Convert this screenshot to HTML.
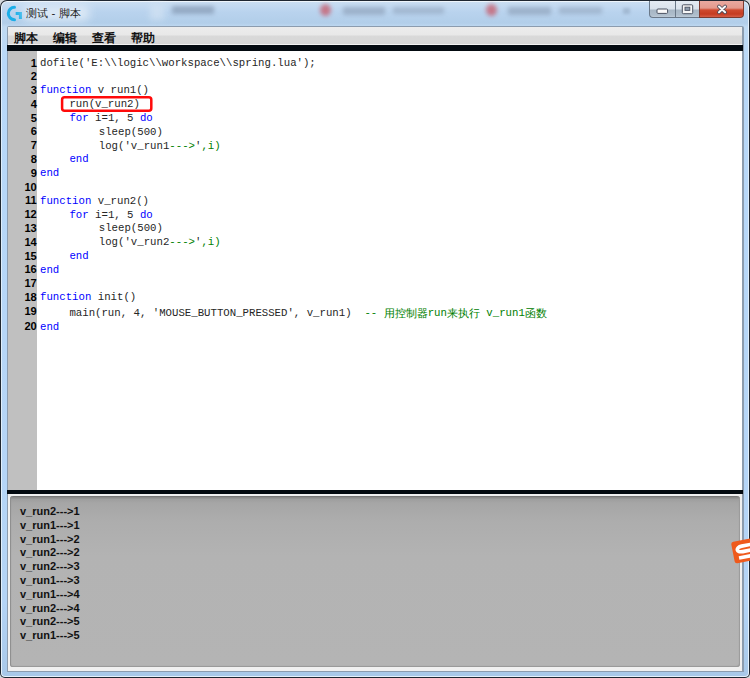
<!DOCTYPE html>
<html><head><meta charset="utf-8">
<style>
html,body{margin:0;padding:0;}
body{width:750px;height:678px;position:relative;overflow:hidden;background:#d4d8dc;font-family:"Liberation Sans",sans-serif;}
.abs{position:absolute;}
#outer{left:0;top:0;width:750px;height:678px;background:#1f2731;border-radius:7px 7px 5px 5px;}
#frame{left:1px;top:1px;width:748px;height:676px;border-radius:6px 6px 4px 4px;
 background:linear-gradient(to bottom,#eef5fb 0px,#dcecfa 60px,#e2f0fc 600px,#e6f2fc 678px);}
#frameinner{left:2px;top:2px;width:746px;height:674px;border-radius:5px 5px 3px 3px;
 background:linear-gradient(to bottom,#cadef2 0px,#b9d3ee 10px,#b2cee9 21px,#c0daf2 25px,#b8d8f8 60px,#b4d4f6 600px,#a8c8e8 676px);}
#cborder{left:7px;top:26px;width:737px;height:646px;background:#8c9cae;border-radius:2px 2px 0 0;}
#client{left:8px;top:27px;width:734px;height:644px;background:#f0f0f0;}
#menubar{left:8px;top:27px;width:734px;height:18px;background:linear-gradient(to bottom,#ececec 0,#e8e8e8 8px,#d9d9d9 9px,#d6d6d6 17px,#f2f2f2 17px);}
.menu{top:30.5px;font-size:11.6px;font-weight:bold;color:#111;white-space:nowrap;}
#bar1{left:7px;top:45px;width:736px;height:6px;background:#030a10;}
#editor{left:8px;top:51px;width:734px;height:439px;background:#fff;}
#gutter{left:8px;top:51px;width:29px;height:439px;background:#c0c0c0;}
#bar2{left:7px;top:490px;width:736px;height:4px;background:#030a10;}
#console{left:10px;top:496px;width:730px;height:170.6px;border-radius:3px;
 background:linear-gradient(to bottom,#6c6c6c 0,#8a8a8a 1.5px,#9e9e9e 3.5px,#a6a6a6 7px,#adadad 25px,#b3b3b3 60px,#b4b4b4 100%);
 box-shadow:inset 1px 0 1px #8c8c8c, inset -1px -1px 1px #9a9a9a;}
.ln{position:absolute;font-family:"Liberation Sans",sans-serif;font-weight:bold;font-size:11.1px;color:#000;text-align:right;width:28px;left:8.8px;line-height:14px;}
.cl{position:absolute;font-family:"Liberation Mono",monospace;font-size:10.7px;color:#262626;white-space:pre;line-height:14px;}
.k{color:#0000ff;}
.g{color:#008000;}
.cj{display:inline-block;width:11px;font-size:11.3px;text-align:left;position:relative;top:1px;}
.out{position:absolute;left:20px;font-family:"Liberation Sans",sans-serif;font-size:11px;font-weight:bold;color:#111;line-height:14px;white-space:pre;}
.btn{top:1px;height:17px !important;}
</style></head><body>
<div id="outer" class="abs"></div>
<div id="frame" class="abs"></div>
<div id="frameinner" class="abs"></div>

<!-- blurred background in title bar -->
<div class="abs" style="left:150px;top:4px;width:14px;height:16px;background:#d8e6f4;filter:blur(3px);opacity:.6"></div>
<div class="abs" style="left:172px;top:6px;width:42px;height:8px;background:#8094ae;filter:blur(2.2px);opacity:.65"></div>
<div class="abs" style="left:320px;top:4px;width:11px;height:12px;background:#c85868;filter:blur(2px);opacity:.75;border-radius:50%"></div>
<div class="abs" style="left:343px;top:7px;width:42px;height:8px;background:#8a9cb4;filter:blur(2.2px);opacity:.6"></div>
<div class="abs" style="left:393px;top:7px;width:51px;height:7px;background:#8a9cb4;filter:blur(2.2px);opacity:.5"></div>
<div class="abs" style="left:486px;top:4px;width:11px;height:12px;background:#c85868;filter:blur(2px);opacity:.75;border-radius:50%"></div>
<div class="abs" style="left:508px;top:7px;width:43px;height:8px;background:#8a9cb4;filter:blur(2.2px);opacity:.6"></div>
<div class="abs" style="left:559px;top:7px;width:43px;height:7px;background:#8a9cb4;filter:blur(2.2px);opacity:.5"></div>
<div class="abs" style="left:623px;top:8px;width:7px;height:6px;background:#8aa0b8;filter:blur(1.5px);opacity:.5"></div>

<!-- logo -->
<svg class="abs" style="left:6px;top:5px" width="18" height="18" viewBox="0 0 18 18">
 <path d="M8.5 2.3 A5.9 5.9 0 1 0 8.5 14.7" fill="none" stroke="#1aaee8" stroke-width="3" stroke-linecap="round"/>
 <path d="M9.7 7.1 H16 V13.9 H12.9 V10.1 H9.7 Z" fill="#1aaee8"/>
</svg>
<div class="abs" style="left:22px;top:5px;width:68px;height:16px;background:#e4eef8;filter:blur(4px);opacity:.8;border-radius:8px"></div>
<div class="abs" style="left:26.4px;top:6.3px;font-size:11.4px;color:#222;white-space:nowrap;">测试 - 脚本</div>

<!-- caption buttons -->
<div class="abs btn" style="left:649px;width:26px;height:18px;border:1px solid #6a7888;border-top:none;border-right:none;border-radius:0 0 0 4px;box-sizing:border-box;background:linear-gradient(to bottom,#e4ebf3 0,#d9e2ec 8px,#a7b6c4 9px,#aebdcb 14px,#c6d2de 17px);"></div>
<div class="abs btn" style="left:675px;width:24px;height:18px;border:1px solid #6a7888;border-top:none;border-right:none;box-sizing:border-box;background:linear-gradient(to bottom,#e4ebf3 0,#d9e2ec 8px,#a7b6c4 9px,#aebdcb 14px,#c6d2de 17px);"></div>
<div class="abs btn" style="left:699px;width:45px;height:18px;border:1px solid #7c3a30;border-top:none;border-radius:0 0 4px 0;box-sizing:border-box;background:linear-gradient(to bottom,#e9a9a0 0,#e39a8e 7px,#cf4a30 9px,#c53c22 13px,#dc6a54 17px);"></div>
<svg class="abs" style="left:656px;top:8px" width="13" height="7" viewBox="0 0 13 7">
 <rect x="1" y="1" width="10.6" height="4.4" rx="1" fill="#fafafa" stroke="#4a5262" stroke-width="1"/>
</svg>
<svg class="abs" style="left:681px;top:4px" width="13" height="11" viewBox="0 0 13 11">
 <rect x="1.3" y="0.8" width="10.4" height="8.9" rx="1" fill="#f6f6f6" stroke="#4a5262" stroke-width="1"/>
 <rect x="4" y="3.2" width="4.8" height="3.2" fill="#8e9cae" stroke="#4a5262" stroke-width="0.9"/>
</svg>
<svg class="abs" style="left:716px;top:4px" width="12" height="11" viewBox="0 0 12 11">
 <path d="M3 2.5 L9.1 8.3 M9.1 2.5 L3 8.3" stroke="#4f4a58" stroke-width="3.7" stroke-linecap="round"/>
 <path d="M3 2.5 L9.1 8.3 M9.1 2.5 L3 8.3" stroke="#fafafa" stroke-width="2.0" stroke-linecap="round"/>
</svg>

<div id="cborder" class="abs"></div>
<div id="client" class="abs"></div>
<div id="menubar" class="abs"></div>
<div class="abs menu" style="left:14.3px">脚本</div>
<div class="abs menu" style="left:53.3px">编辑</div>
<div class="abs menu" style="left:92.3px">查看</div>
<div class="abs menu" style="left:130.5px">帮助</div>
<div id="bar1" class="abs"></div>
<div id="editor" class="abs"></div>
<div id="gutter" class="abs"></div>
<div id="bar2" class="abs"></div>
<div id="console" class="abs"></div>

<div id="code">
<div class="ln" style="top:55.50px">1</div>
<div class="cl" style="left:40.00px;top:55.85px">dofile('E:\\logic\\workspace\\spring.lua');</div>
<div class="ln" style="top:69.29px">2</div>
<div class="ln" style="top:83.08px">3</div>
<div class="cl" style="left:40.00px;top:83.43px"><span class="k">function</span> v run1()</div>
<div class="ln" style="top:96.87px">4</div>
<div class="cl" style="left:69.40px;top:97.22px">run(v_run2)</div>
<div class="ln" style="top:110.66px">5</div>
<div class="cl" style="left:69.40px;top:111.01px"><span class="k">for</span> i=1, 5 <span class="k">do</span></div>
<div class="ln" style="top:124.45px">6</div>
<div class="cl" style="left:98.80px;top:124.80px">sleep(500)</div>
<div class="ln" style="top:138.24px">7</div>
<div class="cl" style="left:98.80px;top:138.59px">log('v_run1<span class="g">---&gt;</span>'<span class="g">,i)</span></div>
<div class="ln" style="top:152.03px">8</div>
<div class="cl" style="left:69.40px;top:152.38px"><span class="k">end</span></div>
<div class="ln" style="top:165.82px">9</div>
<div class="cl" style="left:40.00px;top:166.17px"><span class="k">end</span></div>
<div class="ln" style="top:179.61px">10</div>
<div class="ln" style="top:193.40px">11</div>
<div class="cl" style="left:40.00px;top:193.75px"><span class="k">function</span> v_run2()</div>
<div class="ln" style="top:207.19px">12</div>
<div class="cl" style="left:69.40px;top:207.54px"><span class="k">for</span> i=1, 5 <span class="k">do</span></div>
<div class="ln" style="top:220.98px">13</div>
<div class="cl" style="left:98.80px;top:221.33px">sleep(500)</div>
<div class="ln" style="top:234.77px">14</div>
<div class="cl" style="left:98.80px;top:235.12px">log('v_run2<span class="g">---&gt;</span>'<span class="g">,i)</span></div>
<div class="ln" style="top:248.56px">15</div>
<div class="cl" style="left:69.40px;top:248.91px"><span class="k">end</span></div>
<div class="ln" style="top:262.35px">16</div>
<div class="cl" style="left:40.00px;top:262.70px"><span class="k">end</span></div>
<div class="ln" style="top:276.14px">17</div>
<div class="ln" style="top:289.93px">18</div>
<div class="cl" style="left:40.00px;top:290.28px"><span class="k">function</span> init()</div>
<div class="ln" style="top:303.72px">19</div>
<div class="cl" style="left:69.40px;top:305.67px">main(run, 4, 'MOUSE_BUTTON_PRESSED', v_run1)  <span class="g">-- <span class="cj">用</span><span class="cj">控</span><span class="cj">制</span><span class="cj">器</span>run<span class="cj">来</span><span class="cj">执</span><span class="cj">行</span> v_run1<span class="cj">函</span><span class="cj">数</span></span></div>
<div class="ln" style="top:319.21px">20</div>
<div class="cl" style="left:40.00px;top:319.56px"><span class="k">end</span></div>
</div>
<div id="outp">
<div class="out" style="top:504.00px">v_run2---&gt;1</div>
<div class="out" style="top:517.80px">v_run1---&gt;1</div>
<div class="out" style="top:531.60px">v_run1---&gt;2</div>
<div class="out" style="top:545.40px">v_run2---&gt;2</div>
<div class="out" style="top:559.20px">v_run2---&gt;3</div>
<div class="out" style="top:573.00px">v_run1---&gt;3</div>
<div class="out" style="top:586.80px">v_run1---&gt;4</div>
<div class="out" style="top:600.60px">v_run2---&gt;4</div>
<div class="out" style="top:614.40px">v_run2---&gt;5</div>
<div class="out" style="top:628.20px">v_run1---&gt;5</div>
</div>
<svg class="abs" style="left:726px;top:532px" width="24" height="36" viewBox="0 0 24 36">
 <g transform="translate(4.9 10.3) rotate(-11)">
  <rect x="0" y="0" width="32" height="21.8" rx="2.5" fill="#ef5a1c"/>
  <path d="M32 5.8 H9.8 C3.2 5.8 3.2 11.4 9.8 11.4 H21 C27 11.4 27 16.9 21 16.9 H5" fill="none" stroke="#fff" stroke-width="3.6"/>
 </g>
</svg>
<svg id="redbox" class="abs" style="left:0;top:0" width="200" height="130"><rect x="62.1" y="97.2" width="89.2" height="13.6" rx="2.5" fill="none" stroke="#ff0a0a" stroke-width="2.5"/></svg>
</body></html>
